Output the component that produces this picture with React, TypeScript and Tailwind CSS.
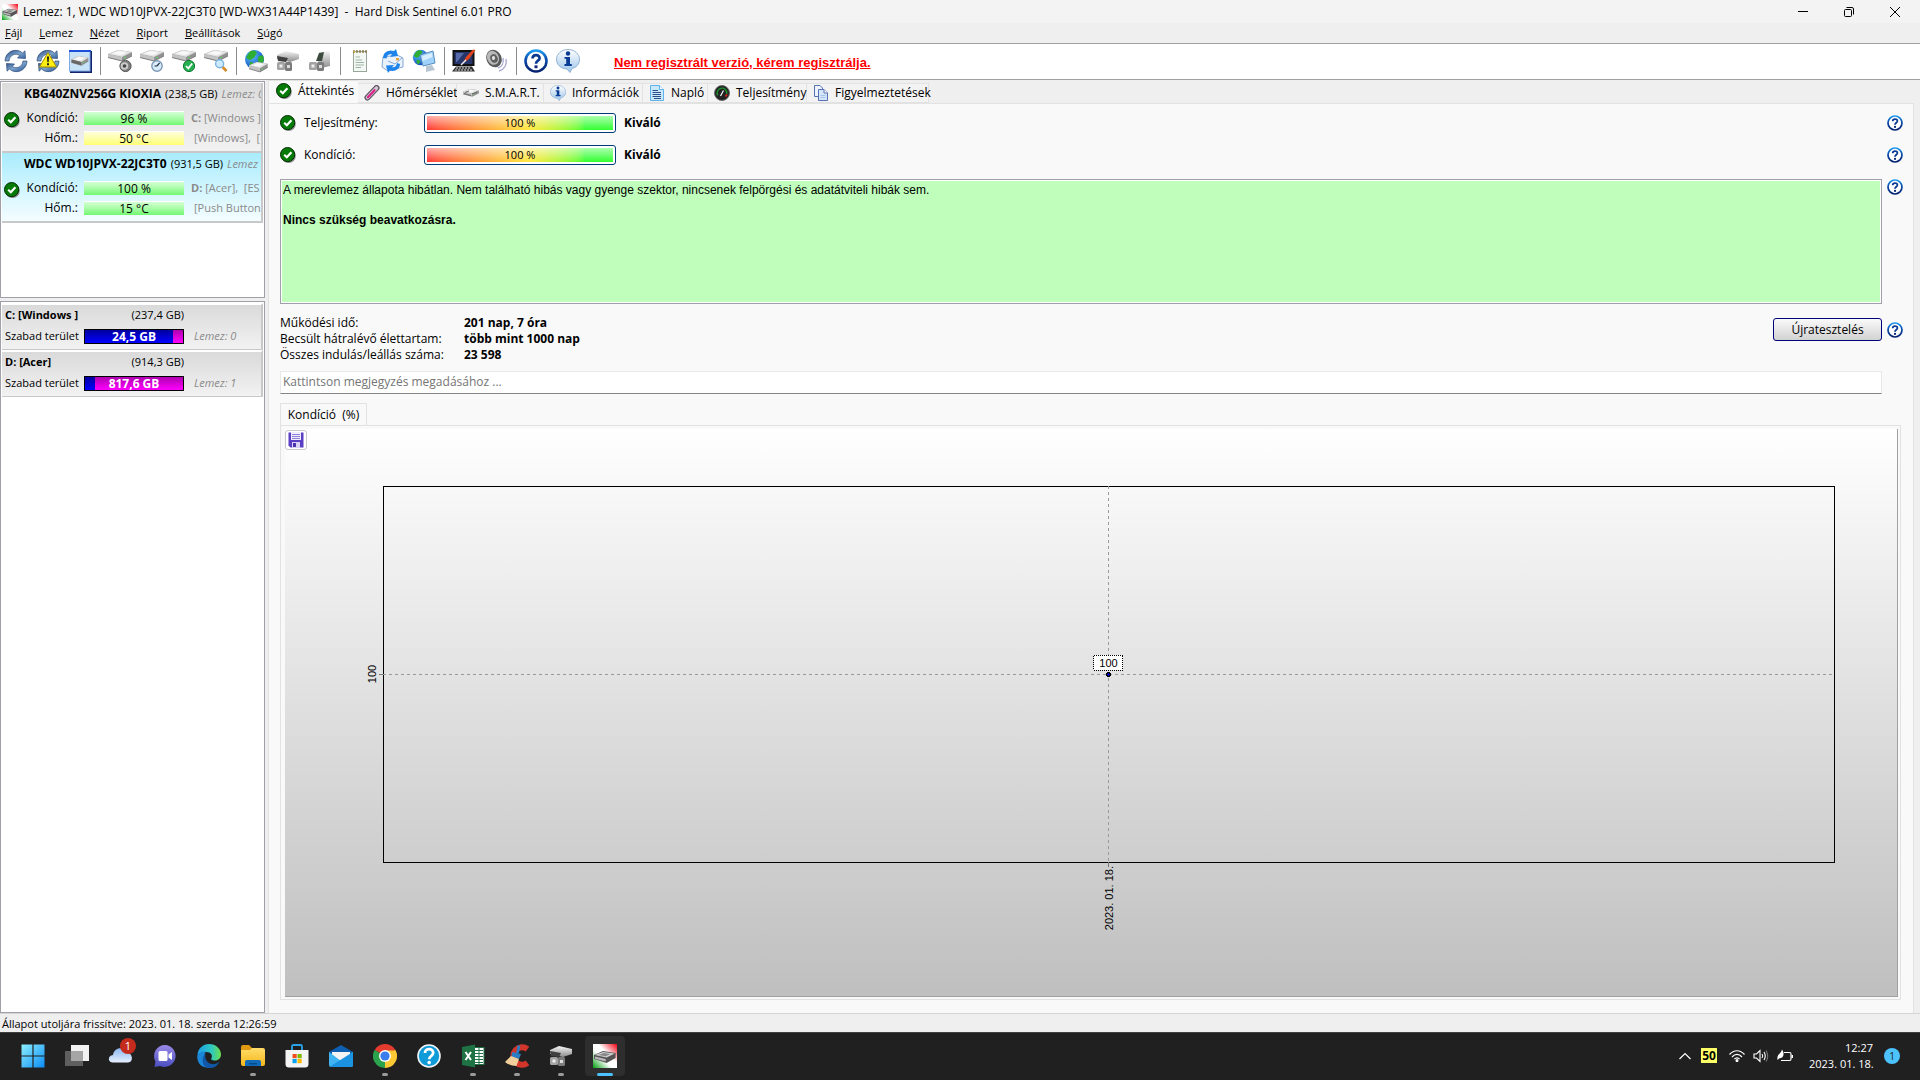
import type { ReactNode } from "react";

type IconProps = { size?: number };

function Defs() {
  return (
    <svg width="0" height="0" className="absolute" aria-hidden="true">
      <defs>
        <linearGradient id="metal" x1="0" y1="0" x2="0" y2="1">
          <stop offset="0" stopColor="#f4f4f4" />
          <stop offset="1" stopColor="#8c8c8c" />
        </linearGradient>
        <linearGradient id="blueArrow" x1="0" y1="0" x2="1" y2="1">
          <stop offset="0" stopColor="#1f3f7c" />
          <stop offset="0.5" stopColor="#7ea5cc" />
          <stop offset="1" stopColor="#1c4a92" />
        </linearGradient>
        <linearGradient id="helpRing" x1="0" y1="0" x2="0" y2="1">
          <stop offset="0" stopColor="#1e9bf0" />
          <stop offset="0.4" stopColor="#0a4fb0" />
          <stop offset="1" stopColor="#04206e" />
        </linearGradient>
        <radialGradient id="globe" cx="0.35" cy="0.3" r="0.8">
          <stop offset="0" stopColor="#5cc3ff" />
          <stop offset="1" stopColor="#0a3fb5" />
        </radialGradient>
        <linearGradient id="bubble" x1="0" y1="0" x2="0" y2="1">
          <stop offset="0" stopColor="#ffffff" />
          <stop offset="1" stopColor="#9cc4ea" />
        </linearGradient>
        <linearGradient id="win" x1="0" y1="0" x2="1" y2="1">
          <stop offset="0" stopColor="#8df0ff" />
          <stop offset="1" stopColor="#0a8cf5" />
        </linearGradient>
        <linearGradient id="flag" x1="1" y1="0" x2="0" y2="1">
          <stop offset="0" stopColor="#f00010" />
          <stop offset="0.4" stopColor="#ffffff" />
          <stop offset="0.6" stopColor="#ffffff" />
          <stop offset="1" stopColor="#00a010" />
        </linearGradient>
        <linearGradient id="edge" x1="0" y1="0" x2="1" y2="0">
          <stop offset="0" stopColor="#1c9de8" />
          <stop offset="0.6" stopColor="#2fc8c0" />
          <stop offset="1" stopColor="#6be04c" />
        </linearGradient>
        <linearGradient id="chat" x1="0" y1="0" x2="0" y2="1">
          <stop offset="0" stopColor="#9a8ae8" />
          <stop offset="1" stopColor="#4b4fc0" />
        </linearGradient>
        <linearGradient id="cloud" x1="0" y1="0" x2="0" y2="1">
          <stop offset="0" stopColor="#8db8f2" />
          <stop offset="1" stopColor="#e6f0fd" />
        </linearGradient>
        <linearGradient id="folder" x1="0" y1="0" x2="0" y2="1">
          <stop offset="0" stopColor="#ffdc6a" />
          <stop offset="1" stopColor="#f6b619" />
        </linearGradient>
      </defs>
    </svg>
  );
}

function Svg({ size = 24, box = 24, children }: { size?: number; box?: number; children: ReactNode }) {
  return (
    <svg width={size} height={size} viewBox={`0 0 ${box} ${box}`} className="shrink-0" aria-hidden="true">
      {children}
    </svg>
  );
}

/* A flat hard disk seen from above, drawn in a 24 by 12 area */
function DriveShape() {
  return (
    <g>
      <path d="M0 4 L10 0 L24 2 L24 6 L14 11 L0 7.500 Z" fill="#929292" />
      <path d="M0 4 L10 0 L24 2 L14 7 Z" fill="#e2e2e2" />
      <path d="M0 4 L14 7 L14 11 L0 7.500 Z" fill="#c4c4c4" />
      <path d="M4 3.800 L10.500 1 L19 2.200 L13 5.200 Z" fill="#f8f8f8" />
      <path d="M0 7.500 L14 11 L24 6" fill="none" stroke="#6c6c6c" strokeWidth="0.8" />
      <rect x="16" y="7" width="2" height="1.2" fill="#5ad35a" />
    </g>
  );
}

function CheckIcon({ size = 16 }: IconProps) {
  return (
    <Svg size={size} box={16}>
      <circle cx="8.6" cy="8.8" r="7.2" fill="#8a8a8a" />
      <circle cx="7.6" cy="7.6" r="7.1" fill="#067a06" stroke="#022b02" />
      <path d="M4.2 7.8 L6.8 10.2 L11.4 5.2" fill="none" stroke="#fff" strokeWidth="2.2" />
    </Svg>
  );
}

function HelpIcon({ size = 16 }: IconProps) {
  return (
    <Svg size={size} box={16}>
      <circle cx="8" cy="8" r="7" fill="#fff" stroke="url(#helpRing)" strokeWidth="1.7" />
      <path d="M5.7 6.3 C5.7 3.4 10.4 3.4 10.4 6.1 C10.4 7.9 8 7.7 8 9.8" fill="none" stroke="#0b3a94" strokeWidth="1.8" />
      <rect x="7" y="10.9" width="2" height="1.9" fill="#0b2a7c" />
    </Svg>
  );
}

function InfoIcon({ size = 24 }: IconProps) {
  return (
    <Svg size={size}>
      <path d="M12 0.500 C18.500 0.500 23.500 5 23.500 10.4 C23.500 15.500 20 18.500 16 19.500 L14 23.500 L11 20 C4.500 19.500 0.500 15.4 0.500 10.4 C0.500 5 5.500 0.500 12 0.500 Z" fill="url(#bubble)" stroke="#8fb0d4" />
      <circle cx="12" cy="4.500" r="2.200" fill="#0a3c96" />
      <path d="M8.500 8 H14 V15 H15.800 V17 H8.500 V15 H10.200 V9.800 H8.500 Z" fill="#0a3c96" />
    </Svg>
  );
}

function RefreshShape() {
  return (
    <g fill="url(#blueArrow)" stroke="#173769" strokeWidth="0.6">
      <path d="M1 12 C1 5 8 -1 16 2.2 L18.5 4 L21 1.8 L21.5 9.5 L13.5 9 L15.8 6.6 C11.5 3.6 5.6 6 5 12 Z" />
      <path d="M23 12 C23 19 16 25 8 21.8 L5.5 20 L3 22.2 L2.5 14.5 L10.5 15 L8.2 17.4 C12.5 20.4 18.4 18 19 12 Z" />
    </g>
  );
}

function RefreshIcon() {
  return <Svg><RefreshShape /></Svg>;
}

function RefreshWarnIcon() {
  return (
    <Svg>
      <RefreshShape />
      <path d="M12 3.5 L20.5 18 H3.5 Z" fill="#ffee10" stroke="#a89000" />
      <path d="M11 7.6 H13 L12.6 13.2 H11.4 Z M11.1 14.3 H12.9 V16.2 H11.1 Z" fill="#111" />
    </Svg>
  );
}

function DriveWindowIcon() {
  return (
    <Svg>
      <rect x="2" y="2" width="22" height="22" fill="#11246c" />
      <rect x="1.5" y="1.5" width="20.5" height="20.5" fill="#c8e2f8" stroke="#7fa8e4" />
      <rect x="1" y="1" width="22" height="2" fill="#1b4fd8" />
      <g transform="translate(3.500 7) scale(.7 .85)">
        <DriveShape />
        <path d="M0 4 V7.500 L14 11 V7 Z" fill="#666" />
      </g>
    </Svg>
  );
}

function DriveIcon({ children }: { children: ReactNode }) {
  return (
    <Svg>
      <g transform="translate(0 1)"><DriveShape /></g>
      {children}
    </Svg>
  );
}

const SpeakerDriveIcon = () => (
  <DriveIcon>
    <circle cx="17.500" cy="17" r="5.600" fill="#7e7e7e" stroke="#555" />
    <circle cx="16.500" cy="17" r="3.8" fill="#c9c9c9" />
    <circle cx="16.500" cy="17" r="1.8" fill="#444" />
  </DriveIcon>
);
const ClockDriveIcon = () => (
  <DriveIcon>
    <circle cx="17" cy="17" r="5.2" fill="#d9ecfb" stroke="#7d98b4" strokeWidth="1.4" />
    <path d="M17 17 L19.6 13.8 M17 17 H14.5" stroke="#234" strokeWidth="1.2" />
  </DriveIcon>
);
const CheckDriveIcon = () => (
  <DriveIcon>
    <circle cx="17" cy="17" r="5.6" fill="#27b052" stroke="#0c7a30" />
    <path d="M14 17 L16.3 19.400 L20.2 14.500" fill="none" stroke="#fff" strokeWidth="1.8" />
  </DriveIcon>
);
const SearchDriveIcon = () => (
  <DriveIcon>
    <path d="M18.5 18 L22.5 22" stroke="#d98a28" strokeWidth="2.6" />
    <circle cx="15.6" cy="14.8" r="4" fill="#cdeaff" stroke="#7ab4e2" strokeWidth="1.4" />
  </DriveIcon>
);

function GlobeShape() {
  return (
    <g>
      <circle cx="10" cy="10" r="9" fill="url(#globe)" />
      <path d="M5 3 C9 0 13 2 12 5 C10 6 11 8 8 9 C6 12 3 9 2 8 Z M14 7 L18 6 C20 10 18 15 15 16 C12 14 15 12 13 10 Z M6 12 L10 14 L8 18 C5 17 5 14 6 12 Z" fill="#2fae34" />
    </g>
  );
}
const GlobeDriveIcon = () => (
  <Svg>
    <g transform="scale(1.05)"><GlobeShape /></g>
    <g transform="translate(5 13) scale(.78 .9)"><DriveShape /></g>
  </Svg>
);
function DockIcon({ upright = false }: { upright?: boolean }) {
  return (
    <Svg>
      <path d={upright ? "M11 3 L20 2 L22 4 V17 L13 19 L10 16 Z" : "M1 6 L10 2 L23 5 V10 L14 13 L1 10 Z"} fill="url(#metal)" />
      {upright && <path d="M11 4 L16 3 L14 12 L8 12 Z" fill="#3c4a3e" />}
      {!upright && <path d="M1 7 L12 9 L10 13 L2 12 Z" fill="#404040" />}
      <rect x="1" y="13" width="8" height="8" rx="1.5" fill="#a2a2a2" />
      <rect x="9" y="13" width="7" height="9" rx="1.5" fill="#7c7c7c" />
      <rect x="3.5" y="15.5" width="3" height="3" fill="#eee" />
      <rect x="11" y="16" width="3" height="3" fill="#ddd" />
    </Svg>
  );
}
const NotepadIcon = () => (
  <Svg>
    <rect x="5.500" y="2.500" width="13" height="20" fill="#f4f8f4" stroke="#98a79a" />
    <path d="M6 1 V4 M9 1 V4 M12 1 V4 M15 1 V4 M18 1 V4" stroke="#7c6c30" strokeWidth="1.2" />
    <path d="M7.5 8 H12 M7.5 11 H14 M7.5 13.5 H16 M7.5 16 H16 M7.5 18.5 H13" stroke="#9db4a4" />
    <path d="M5 2 L7 2 L7 4 Z" fill="#e8b628" />
  </Svg>
);
const MailIcon = () => (
  <Svg>
    <path d="M3 8 L17 6 L23 9 V18 L8 22 L2 18 Z" fill="#e9f2fc" stroke="#86a9d4" />
    <path d="M8 12 L15 15 L22 9" fill="none" stroke="#86a9d4" />
    <path d="M3 9 C3 3 9 0 14 2 L16 0 L18 7 L10 8 L12 5.4 C9 4.6 7 6 6.5 9.5 Z" fill="#1f84ea" />
    <path d="M20 15 C20 20 15 23 10 21.6 L8 24 L6 16.5 L14 16 L12 18.2 C15 18.6 16.5 17 17 14 Z" fill="#1f84ea" />
    <rect x="16" y="9" width="3" height="2.4" fill="#e8a23a" />
  </Svg>
);
const NetworkIcon = () => (
  <Svg>
    <g transform="scale(.85)"><GlobeShape /></g>
    <path d="M8 6 L21 2 L23 14 L11 17 Z" fill="#9fd2fb" stroke="#5b8cba" />
    <path d="M10 7 L20 4 L20.5 8 L10.5 12 Z" fill="#d7eefe" />
    <path d="M14 17 L20 16 L23 21 L14 23 Z" fill="#b9c6d4" />
  </Svg>
);
const ScreenPenIcon = () => (
  <Svg>
    <rect x="1.5" y="2" width="20" height="14" fill="#26366a" stroke="#111" strokeWidth="2" />
    <path d="M4 4 H12 L5 13 H4 Z" fill="#556aa8" />
    <path d="M23.500 1 L21 0.500 L14 8 L11 14 L17 10 Z" fill="#e3451c" />
    <path d="M14 11 L9 16" stroke="#eee" strokeWidth="1.5" />
    <path d="M0 22.5 L4 17.500 H20 L23 22.5 Z" fill="#333" />
    <path d="M4 19 H19 M3 21 H20" stroke="#d9d9d9" strokeWidth="1" strokeDasharray="2 1" />
  </Svg>
);
const LoudspeakerIcon = () => (
  <Svg>
    <path d="M15 22 C21 20 23 15 22 10 M14 19 C18 18 20 14 19 9" fill="none" stroke="#a9a9cf" strokeWidth="1.4" />
    <ellipse cx="10" cy="9.5" rx="7.500" ry="9" transform="rotate(-25 10 9.5)" fill="#5a5a5a" />
    <ellipse cx="9" cy="8.8" rx="5.800" ry="7.2" transform="rotate(-25 9 8.8)" fill="#b8b8b8" />
    <ellipse cx="10" cy="9.5" rx="3.6" ry="4.4" transform="rotate(-25 10 9.5)" fill="#606060" />
    <ellipse cx="9.5" cy="9" rx="1.6" ry="2" fill="#e4e4e4" />
  </Svg>
);

const ThermoIcon = () => (
  <Svg size={16} box={16}>
    <path d="M3.500 12.500 L12.500 3" stroke="#5d5560" strokeWidth="6" strokeLinecap="round" />
    <path d="M3.500 12.5 L12.500 3" stroke="#cfc6d2" strokeWidth="3.6" strokeLinecap="round" />
    <path d="M3.900 12.2 L10.500 5.200" stroke="#e0218a" strokeWidth="2.2" strokeLinecap="round" />
  </Svg>
);
const SmallDriveIcon = () => (
  <Svg size={16} box={16}>
    <g transform="translate(0 4) scale(.66)"><DriveShape /></g>
    <path d="M2 7.500 L6 6 M9 9 L14 7 M1 8.500 L8 10.500" stroke="#666" />
  </Svg>
);
const LogIcon = () => (
  <Svg size={16} box={16}>
    <path d="M1.5 0.5 H10.5 L14.5 4.5 V15.5 H1.5 Z" fill="#c9e8fc" stroke="#5fb2ea" />
    <path d="M10.5 0.5 V4.5 H14.5" fill="#fff" stroke="#5fb2ea" />
    <path d="M3.5 5.5 H9 M3.5 7.5 H12 M3.5 9.5 H12 M3.5 11.5 H12 M5 13.5 H12" stroke="#2c4f8c" />
  </Svg>
);
const GaugeIcon = () => (
  <Svg size={16} box={16}>
    <circle cx="8" cy="8" r="7.5" fill="#222" stroke="#6b6b6b" />
    <circle cx="8" cy="8" r="4.8" fill="none" stroke="#1d8f2d" strokeWidth="1.6" strokeDasharray="18 12" transform="rotate(150 8 8)" />
    <path d="M11.5 11.5 L13 9.5" stroke="#e02020" strokeWidth="1.8" />
    <path d="M6.5 11 L9.5 5.5" stroke="#fff" strokeWidth="1.2" />
  </Svg>
);
const CopyIcon = () => (
  <Svg size={16} box={16}>
    <path d="M1.5 0.5 H7 L9.5 3 V11.5 H1.5 Z" fill="#eef4fd" stroke="#5670b4" />
    <path d="M5.5 4.5 H11 L14.5 8 V15.5 H5.5 Z" fill="#d6e6fa" stroke="#5670b4" />
    <path d="M11 4.5 V8 H14.5" fill="#fff" stroke="#5670b4" />
    <path d="M7.5 10.5 H12.5 M7.5 12.5 H12.5" stroke="#a5c2ea" />
  </Svg>
);

function AppIcon({ size = 16 }: IconProps) {
  return (
    <Svg size={size}>
      <rect width="24" height="24" fill="url(#flag)" />
      <g transform="translate(1 7) scale(.9 1)">
        <path d="M0 4 L10 0 L24 2 L24 7 L14 12 L0 8 Z" fill="#555" />
        <path d="M1 4 L10 1 L23 2.5 L14 6.4 Z" fill="#cfcfcf" />
        <path d="M5 4 L11 2 L18 3 L13 5.2 Z" fill="#888" />
        <path d="M1 5.5 L13 8 V10.5 L1 7.8 Z" fill="#b8b8b8" />
      </g>
    </Svg>
  );
}

const toolbarGroups: { label: string; icon: ReactNode }[][] = [
  [
    { label: "Frissítés", icon: <RefreshIcon /> },
    { label: "Teljes frissítés", icon: <RefreshWarnIcon /> },
    { label: "Lemez ablak", icon: <DriveWindowIcon /> },
  ],
  [
    { label: "Zajszint", icon: <SpeakerDriveIcon /> },
    { label: "Rövid teszt", icon: <ClockDriveIcon /> },
    { label: "Hosszú teszt", icon: <CheckDriveIcon /> },
    { label: "Felületi teszt", icon: <SearchDriveIcon /> },
  ],
  [
    { label: "Online", icon: <GlobeDriveIcon /> },
    { label: "Csatlakoztatás", icon: <DockIcon /> },
    { label: "Leválasztás", icon: <DockIcon upright /> },
  ],
  [
    { label: "Jelentés", icon: <NotepadIcon /> },
    { label: "Jelentés küldése", icon: <MailIcon /> },
    { label: "Hálózat", icon: <NetworkIcon /> },
  ],
  [
    { label: "Beállítások", icon: <ScreenPenIcon /> },
    { label: "Hangok", icon: <LoudspeakerIcon /> },
  ],
  [
    { label: "Súgó", icon: <HelpIcon size={24} /> },
    { label: "Névjegy", icon: <InfoIcon /> },
  ],
];

function TitleBar() {
  return (
    <header className="flex h-[23px] shrink-0 items-center bg-[#f3f3f3] pl-0.5">
      <AppIcon />
      <h1 className="ml-[5px] grow text-xs whitespace-pre">
        Lemez: 1, WDC WD10JPVX-22JC3T0 [WD-WX31A44P1439]  -  Hard Disk Sentinel 6.01 PRO
      </h1>
      <button aria-label="Kis méret" className="flex h-full w-[46px] items-center justify-center">
        <svg width="10" height="10" viewBox="0 0 10 10"><path d="M0 4.5 H10" stroke="#000" /></svg>
      </button>
      <button aria-label="Előző méret" className="flex h-full w-[46px] items-center justify-center">
        <svg width="10" height="10" viewBox="0 0 10 10" fill="none" stroke="#000">
          <rect x="0.5" y="2.5" width="7" height="7" rx="1" />
          <path d="M2.5 0.5 H8 Q9.5 0.5 9.5 2 V7.5" />
        </svg>
      </button>
      <button aria-label="Bezárás" className="mr-0.5 flex h-full w-[46px] items-center justify-center">
        <svg width="10" height="10" viewBox="0 0 10 10"><path d="M0 0 L10 10 M10 0 L0 10" stroke="#000" /></svg>
      </button>
    </header>
  );
}

const menus = [
  ["F", "ájl"],
  ["L", "emez"],
  ["N", "ézet"],
  ["R", "iport"],
  ["B", "eállítások"],
  ["S", "úgó"],
];

function MenuBar() {
  return (
    <nav className="flex h-[21px] shrink-0 items-center gap-[17px] border-b border-[#a0a0a0] bg-[#efefef] pl-[5px] text-[11px]">
      {menus.map(([key, rest]) => (
        <button key={key} className="whitespace-nowrap">
          <span className="underline">{key}</span>{rest}
        </button>
      ))}
    </nav>
  );
}

function Toolbar() {
  return (
    <div className="flex h-9 shrink-0 items-center border-b border-[#a0a0a0] bg-white">
      {toolbarGroups.map((group, i) => (
        <div key={i} className="flex items-center pb-0.5">
          {i > 0 && <span className="mr-[3px] ml-1 h-7 w-px bg-[#8c8c8c]" />}
          {group.map((b) => (
            <button key={b.label} aria-label={b.label} className="flex h-8 w-8 items-center justify-center">
              {b.icon}
            </button>
          ))}
        </div>
      ))}
      <a href="#register" className="ml-[30px] pt-[3px] font-['Liberation_Sans',sans-serif] text-[13px] font-bold whitespace-nowrap text-[#ff0000] underline">
        Nem regisztrált verzió, kérem regisztrálja.
      </a>
    </div>
  );
}

type Disk = { name: string; size: string; lemez: string; health: string; temp: string; tempWarm: boolean; drive: string; parts: string; volumes: string; selected: boolean };

const disks: Disk[] = [
  { name: "KBG40ZNV256G KIOXIA", size: "(238,5 GB)", lemez: "Lemez: 0", health: "96 %", temp: "50 °C", tempWarm: true, drive: "C:", parts: "[Windows ]", volumes: "[Windows],  [", selected: false },
  { name: "WDC WD10JPVX-22JC3T0", size: "(931,5 GB)", lemez: "Lemez", health: "100 %", temp: "15 °C", tempWarm: false, drive: "D:", parts: "[Acer],  [ES", volumes: "[Push Button", selected: true },
];

function Meter({ text, warm }: { text: string; warm?: boolean }) {
  return (
    <span className={`h-3.5 w-[100px] shrink-0 border-t border-white text-center text-xs leading-3.5 ${warm ? "bg-linear-to-b from-[#ffffd8] to-[#ffff70]" : "bg-linear-to-b from-[#d4ffd4] to-[#70f870]"}`}>
      {text}
    </span>
  );
}

function DiskItem({ disk }: { disk: Disk }) {
  return (
    <button className={`flex h-[70px] w-full flex-col items-start overflow-hidden border-r-2 border-b-2 border-[#c8c8c8] text-left text-xs whitespace-nowrap ${disk.selected ? "bg-linear-to-b from-[#a8ecfd] to-[#f4fdff]" : "bg-linear-to-b from-[#dcdcdc] to-[#f2f2f2]"}`}>
      <span className="flex h-[22px] items-center gap-1 pl-[22px]">
        <b>{disk.name}</b>
        <span className="text-[11px]">{disk.size}</span>
        <i className="text-[11px] text-[#8a8a8a]">{disk.lemez}</i>
      </span>
      <span className="mt-[3px] flex items-start">
        <span className="mt-1 w-6 shrink-0 pl-0.5"><CheckIcon /></span>
        <span className="flex flex-col">
          <span className="flex h-5 items-center">
            <span className="mr-1 w-[54px] pr-0.5 text-right">Kondíció:</span>
            <Meter text={disk.health} />
            <span className="ml-[7px] text-[11px] whitespace-pre text-[#8a8a8a]"><b>{disk.drive}</b> {disk.parts}</span>
          </span>
          <span className="flex h-5 items-center">
            <span className="mr-1 w-[54px] pr-0.5 text-right">Hőm.:</span>
            <Meter text={disk.temp} warm={disk.tempWarm} />
            <span className="ml-[10px] text-[11px] whitespace-pre text-[#8a8a8a]">{disk.volumes}</span>
          </span>
        </span>
      </span>
    </button>
  );
}

const partitions = [
  { name: "C: [Windows ]", size: "(237,4 GB)", free: "24,5 GB", used: 90, lemez: "Lemez: 0" },
  { name: "D: [Acer]", size: "(914,3 GB)", free: "817,6 GB", used: 10, lemez: "Lemez: 1" },
];

function Sidebar() {
  return (
    <aside className="mt-px flex w-[265px] shrink-0 flex-col gap-[3px]">
      <div className="h-[217px] shrink-0 border border-[#a0a0a8] bg-white p-px">
        {disks.map((d) => <DiskItem key={d.name} disk={d} />)}
      </div>
      <div className="grow border border-[#a0a0a8] bg-white p-px">
        {partitions.map((p) => (
          <button key={p.name} className="flex h-[47px] w-full flex-col items-start border-t-2 border-r-2 border-b border-[#c8c8c8] border-t-white bg-linear-to-b from-[#dadada] to-[#f2f2f2] pl-[3px] text-left text-[11px] whitespace-nowrap">
            <span className="flex h-5 w-[179px] items-center justify-between">
              <b>{p.name}</b>
              <span>{p.size}</span>
            </span>
            <span className="mt-[3px] flex items-center">
              <span className="w-[79px]">Szabad terület</span>
              <span className="grid h-[15px] w-[100px] border border-black bg-linear-to-b from-[#b000b0] to-[#ff00ff]">
                <span className="col-start-1 row-start-1 h-full bg-linear-to-b from-[#0000a0] to-[#0000ff]" style={{ width: `${p.used}%` }} />
                <b className="col-start-1 row-start-1 text-center text-xs leading-[13px] text-white">{p.free}</b>
              </span>
              <i className="ml-[10px] text-[#8a8a8a]">{p.lemez}</i>
            </span>
          </button>
        ))}
      </div>
    </aside>
  );
}

const tabs = [
  { label: "Hőmérséklet", icon: <ThermoIcon />, cls: "w-[99px]" },
  { label: "S.M.A.R.T.", icon: <SmallDriveIcon />, cls: "w-[87px]" },
  { label: "Információk", icon: <InfoIcon size={16} />, cls: "w-[99px]" },
  { label: "Napló", icon: <LogIcon />, cls: "w-[65px]" },
  { label: "Teljesítmény", icon: <GaugeIcon />, cls: "w-[99px]" },
  { label: "Figyelmeztetések", icon: <CopyIcon />, cls: "w-[122px]" },
];

function Tabs() {
  return (
    <div role="tablist" className="flex h-[23px] shrink-0 items-end text-xs whitespace-nowrap">
      <button role="tab" aria-selected="true" className="flex h-[23px] w-[90px] items-center gap-1.5 border-t border-l border-[#e2e2e2] bg-[#f9f9f9] pb-0.5 pl-[7px]">
        <CheckIcon />
        Áttekintés
      </button>
      {tabs.map((t) => (
        <button key={t.label} role="tab" aria-selected="false" className={`flex h-5 items-center gap-1.5 border border-l-0 border-[#e2e2e2] bg-[#f3f3f3] pl-1.5 ${t.cls}`}>
          {t.icon}
          {t.label}
        </button>
      ))}
    </div>
  );
}

function HelpButton() {
  return (
    <button aria-label="Súgó" className="ml-[5px] h-4 w-4 shrink-0">
      <HelpIcon />
    </button>
  );
}

function StatusRow({ label }: { label: string }) {
  return (
    <div className="flex h-5 items-center">
      <CheckIcon />
      <span className="ml-2 w-[120px]">{label}</span>
      <span className="h-5 w-48 rounded-[3px] border border-[#003c78] bg-white p-0.5">
        <span className="block h-full bg-linear-to-r from-[#ff3232] via-[#ffe63c] via-55% to-[#32ff32] to-85%">
          <span className="block h-full bg-linear-to-b from-white/60 to-transparent text-center text-[11px] leading-3.5">100 %</span>
        </span>
      </span>
      <b className="ml-2 grow">Kiváló</b>
      <HelpButton />
    </div>
  );
}

const stats = [
  ["Működési idő:", "201 nap, 7 óra"],
  ["Becsült hátralévő élettartam:", "több mint 1000 nap"],
  ["Összes indulás/leállás száma:", "23 598"],
];

function HealthChart() {
  return (
    <div className="flex min-h-0 grow flex-col border-r border-b border-[#a0a0a0] bg-linear-to-b from-white to-[#bfbfbf]">
      <button aria-label="Mentés" className="mt-px flex h-5 w-[22px] shrink-0 items-center justify-center rounded-[3px] border border-[#c8c8c8] bg-white">
        <svg width="16" height="16" viewBox="0 0 16 16">
          <path d="M0.5 0.5 H15.5 V15.5 H2.5 L0.5 13.5 Z" fill="#5a3fc4" />
          <rect x="3" y="0" width="10" height="8" fill="#f0eefc" />
          <path d="M4 2.5 H12 M4 4.5 H12 M4 6.5 H12" stroke="#8f80da" />
          <rect x="4" y="10" width="8" height="6" fill="#d8d2f4" />
          <rect x="5" y="11" width="3" height="4" fill="#4a32b0" />
        </svg>
      </button>
      <div className="mt-9 mr-[63px] mb-[134px] ml-[98px] flex min-h-0 grow">
        <svg className="h-0 min-h-full w-full overflow-visible font-['Liberation_Sans',sans-serif] text-[11px]" shapeRendering="crispEdges">
          <rect x="0" y="0" width="100%" height="100%" fill="none" stroke="#000" />
          <g stroke="#9a9a9a" strokeDasharray="3 3">
            <line x1="0" y1="50%" x2="100%" y2="50%" />
            <line x1="50%" y1="0" x2="50%" y2="100%" />
          </g>
          <svg x="0" y="50%" className="overflow-visible">
            <line x1="-4" y1="0" x2="0" y2="0" stroke="#777" />
            <text transform="rotate(-90)" x="0" y="-7" textAnchor="middle">100</text>
          </svg>
          <svg x="50%" y="100%" className="overflow-visible">
            <line x1="0" y1="0" x2="0" y2="5" stroke="#777" />
            <text transform="rotate(-90)" x="-4" y="4" textAnchor="end">2023. 01. 18.</text>
          </svg>
          <svg x="50%" y="50%" className="overflow-visible">
            <rect x="-15" y="-19" width="29" height="15" fill="#fff" stroke="#000" strokeDasharray="1 1" />
            <text x="0" y="-7" textAnchor="middle">100</text>
            <path d="M-2 -1 H-1 V-2 H1 V-1 H2 V1 H1 V2 H-1 V1 H-2 Z" fill="#00c" stroke="#000" />
          </svg>
        </svg>
      </div>
    </div>
  );
}

function Overview() {
  return (
    <main className="mr-1.5 flex min-h-0 grow flex-col border border-b-0 border-[#e2e2e2] bg-[#f9f9f9] pt-[9px] pr-2.5 pb-[13px] pl-[11px] text-xs">
      <div className="flex flex-col gap-3">
        <StatusRow label="Teljesítmény:" />
        <StatusRow label="Kondíció:" />
      </div>
      <div className="mt-3.5 flex items-start">
        <div className="h-[125px] grow border border-[#a0a0a8] bg-white p-px">
          <div className="h-full bg-[#bfffbb] px-px pt-0.5 font-['Liberation_Sans',sans-serif] leading-[15px]">
            <p>A merevlemez állapota hibátlan. Nem található hibás vagy gyenge szektor, nincsenek felpörgési és adatátviteli hibák sem.</p>
            <p className="mt-[15px] font-bold">Nincs szükség beavatkozásra.</p>
          </div>
        </div>
        <HelpButton />
      </div>
      <div className="mt-[11px] flex items-start">
        <dl className="grow leading-4">
          {stats.map(([k, v]) => (
            <div key={k} className="flex">
              <dt className="w-[184px]">{k}</dt>
              <dd className="font-bold">{v}</dd>
            </div>
          ))}
        </dl>
        <div className="mt-[3px] flex items-center">
          <button className="h-[23px] w-[109px] rounded-[3px] border border-[#00007c] bg-linear-to-b from-[#fafafa] to-[#d2d2d2]">Újratesztelés</button>
          <HelpButton />
        </div>
      </div>
      <input
        aria-label="Megjegyzés"
        placeholder="Kattintson megjegyzés megadásához ..."
        className="mt-2 mr-[21px] h-[23px] shrink-0 border border-[#e8e8e8] border-b-[#858585] bg-white px-0.5 pb-0.5 placeholder:text-[#757575] placeholder:opacity-100"
      />
      <div role="tablist" className="mt-[9px] flex shrink-0">
        <button role="tab" aria-selected="true" className="h-[22px] w-[87px] border border-b-0 border-[#e2e2e2] whitespace-pre">Kondíció  (%)</button>
      </div>
      <section className="mr-0.5 flex min-h-0 grow flex-col border border-[#e2e2e2] pt-[3px] pr-0.5 pb-0.5 pl-1">
        <HealthChart />
      </section>
    </main>
  );
}

const taskbarApps: { label: string; running?: boolean; active?: boolean; icon: ReactNode }[] = [
  {
    label: "Start",
    icon: (
      <Svg><path d="M0.5 0.5 H11.4 V11.4 H0.5 Z M12.6 0.5 H23.5 V11.4 H12.6 Z M0.5 12.6 H11.4 V23.5 H0.5 Z M12.6 12.6 H23.5 V23.5 H12.6 Z" fill="url(#win)" /></Svg>
    ),
  },
  {
    label: "Feladatnézet",
    icon: (
      <Svg>
        <rect x="6" y="1" width="18" height="16" fill="#f2f2f2" />
        <rect x="0" y="7" width="18" height="15" fill="#6b6b6b" fillOpacity="0.85" />
        <rect x="6" y="7" width="12" height="10" fill="#a6a6a6" />
      </Svg>
    ),
  },
  {
    label: "Időjárás",
    icon: (
      <svg width="28" height="26" viewBox="0 0 28 26" className="overflow-visible">
        <path d="M6 19.5 C1 19.5 0 13 6 12 C7 4 17 3 19 9.5 C26 9 27 19.5 21 19.5 Z" fill="url(#cloud)" />
        <circle cx="21" cy="3" r="8" fill="#c42b1c" />
        <text x="21" y="7" textAnchor="middle" fontSize="11" fill="#fff">1</text>
      </svg>
    ),
  },
  {
    label: "Csevegés",
    icon: (
      <Svg>
        <path d="M12 1 A11 11 0 1 1 7 22 L1.5 23 L2.5 17.5 A11 11 0 0 1 12 1 Z" fill="url(#chat)" />
        <rect x="5.5" y="7" width="9" height="10" rx="1.5" fill="#fff" />
        <path d="M15.5 10.5 L19 8 V16 L15.5 13.5 Z" fill="#fff" />
      </Svg>
    ),
  },
  {
    label: "Edge",
    icon: (
      <Svg>
        <path d="M0.5 11 C1 4 6 0 12 0 C19 0 24 5 24 10.5 C24 14 21.5 16.5 18 16.5 C15 16.5 13.5 15.5 14.5 14 C16 11 13.5 8 9.5 8 C5.5 8 2 9.5 0.5 11 Z" fill="url(#edge)" />
        <path d="M0.2 12 C1 9 5 7.2 9 7.6 C6 11 7.5 20 16 21.5 C11 25.5 0 24 0.2 12 Z" fill="#1b86d8" />
        <path d="M8.5 10 C7 16 12 21 18 20 C20 19.6 21.5 18.6 22.5 17.5 C19.5 24.5 12 25.4 8 22.5 C4.5 19 5 12 8.5 10 Z" fill="#1258a8" />
      </Svg>
    ),
  },
  {
    label: "Fájlkezelő",
    running: true,
    icon: (
      <Svg>
        <path d="M0 3 Q0 1 2 1 H8 L11 4 V8 H0 Z" fill="#e09a12" />
        <path d="M0 6 H9 L11 4 H22 Q24 4 24 6 V20 Q24 22 22 22 H2 Q0 22 0 20 Z" fill="url(#folder)" />
        <path d="M4 22 V18 Q4 16 6 16 H18 Q20 16 20 18 V22 Z" fill="#0f6cbd" />
        <rect x="8" y="19" width="8" height="1.4" fill="#0a4a86" />
      </Svg>
    ),
  },
  {
    label: "Microsoft Store",
    icon: (
      <Svg>
        <path d="M7 7 V2.5 Q7 1 8.5 1 H15.5 Q17 1 17 2.5 V7" fill="none" stroke="#2aa4e8" strokeWidth="1.8" />
        <path d="M0.5 6 H23.5 V20 Q23.5 23.5 20 23.5 H4 Q0.5 23.5 0.5 20 Z" fill="#f4f4f4" />
        <rect x="7.5" y="10" width="4.2" height="4.2" fill="#f25022" />
        <rect x="12.5" y="10" width="4.2" height="4.2" fill="#7fba00" />
        <rect x="7.5" y="15" width="4.2" height="4.2" fill="#00a4ef" />
        <rect x="12.5" y="15" width="4.2" height="4.2" fill="#ffb900" />
      </Svg>
    ),
  },
  {
    label: "Posta",
    icon: (
      <Svg>
        <path d="M0 8 L12 1 L24 8 V12 H0 Z" fill="#0f5fb0" />
        <path d="M3 8 H21 V15 L12 18 L3 14 Z" fill="#f4f4f4" />
        <path d="M0 8 L12 17 L24 8 V21 Q24 23 22 23 H2 Q0 23 0 21 Z" fill="#3fb4f0" />
        <path d="M24 8 L1 22.6 Q1.400 23 2 23 H22 Q24 23 24 21 Z" fill="#1c93e0" />
      </Svg>
    ),
  },
  {
    label: "Chrome",
    running: true,
    icon: (
      <Svg>
        <path d="M12 12 L1.600 6 A12 12 0 0 1 22.400 6 Z" fill="#e33b2e" />
        <path d="M12 12 L22.400 6 A12 12 0 0 1 12 24 Z" fill="#fcc934" />
        <path d="M12 12 L12 24 A12 12 0 0 1 1.600 6 Z" fill="#2ba24c" />
        <path d="M12 6.400 H22.600 L17 15 L12 24 Z" fill="#fcc934" />
        <circle cx="12" cy="12" r="6" fill="#fff" />
        <circle cx="12" cy="12" r="4.600" fill="#3b7ded" />
      </Svg>
    ),
  },
  {
    label: "Segítség",
    icon: (
      <Svg>
        <circle cx="12" cy="12" r="11" fill="#0f9ad8" stroke="#f2f6f8" strokeWidth="1.6" />
        <path d="M8 9 C8 4 16.200 4 16.200 8.800 C16.200 12 12.200 12 12.200 15.200" fill="none" stroke="#fff" strokeWidth="2.800" />
        <circle cx="12.200" cy="18.600" r="1.800" fill="#fff" />
      </Svg>
    ),
  },
  {
    label: "Excel",
    running: true,
    icon: (
      <Svg>
        <rect x="12" y="3.500" width="11" height="17" fill="#fff" stroke="#1f7244" />
        <path d="M13 6.500 H22 M13 9.500 H22 M13 12.500 H22 M13 15.500 H22 M13 18.500 H22 M18 4 V20" stroke="#1f7244" />
        <path d="M1 3 L14 0.500 V23.500 L1 21 Z" fill="#1f7244" />
        <path d="M4.500 8 L10 16 M10 8 L4.500 16" stroke="#fff" strokeWidth="2" />
      </Svg>
    ),
  },
  {
    label: "CCleaner",
    running: true,
    icon: (
      <Svg>
        <path d="M22.500 5 A8.800 8.800 0 1 0 22.500 19" fill="none" stroke="#d3352a" strokeWidth="6" />
        <path d="M14 1.500 L12.500 9" stroke="#2c7cc4" strokeWidth="2.800" />
        <path d="M7.500 8 L16 10 L14 15 L6 13 Z" fill="#2c7cc4" />
        <path d="M6 12 L14 15 L11.500 22 Q5 22 0 18 Z" fill="#f0cf9c" />
      </Svg>
    ),
  },
  { label: "Dokkoló", running: true, icon: <DockIcon /> },
  { label: "Hard Disk Sentinel", active: true, icon: <AppIcon size={24} /> },
];

function Taskbar() {
  return (
    <footer className="flex h-12 shrink-0 items-center border-t border-[#404040] bg-[#202020] pr-5 pb-0.5 pl-[11px] text-white">
      <div className="flex grow items-center">
        {taskbarApps.map((a) => (
          <div key={a.label} className="flex w-11 justify-center">
            <button aria-label={a.label} className={`grid h-10 w-10 place-items-center rounded ${a.active ? "bg-[#2e2e2e]" : ""}`}>
              <span className="col-start-1 row-start-1">{a.icon}</span>
              {a.running && <span className="col-start-1 row-start-1 h-[3px] w-1.5 self-end rounded-full bg-[#9a9a9a]" />}
              {a.active && <span className="col-start-1 row-start-1 h-[3px] w-4 self-end rounded-full bg-[#4cc2ff]" />}
            </button>
          </div>
        ))}
      </div>
      <svg width="12" height="8" viewBox="0 0 12 8" className="mr-[10px]"><path d="M0.500 7 L6 1.500 L11.500 7" fill="none" stroke="#fff" strokeWidth="1.200" /></svg>
      <b className="h-[15px] w-4 bg-[#ffff66] text-center text-xs leading-[15px] text-black">50</b>
      <svg width="16" height="12" viewBox="0 0 16 12" fill="none" stroke="#fff" strokeWidth="1.200" className="ml-3">
        <path d="M0.500 4.500 C5 -0.500 11 -0.500 15.500 4.500 M3 7 C6 3.600 10 3.600 13 7 M5.400 9.200 C7 7.400 9 7.400 10.600 9.200" />
        <circle cx="8" cy="10.600" r="0.900" fill="#fff" />
      </svg>
      <svg width="16" height="14" viewBox="0 0 16 14" fill="none" stroke="#fff" strokeWidth="1.100" className="ml-2">
        <path d="M1 5 H3.500 L7 1.500 V12.500 L3.500 9 H1 Z M9 5 Q10.500 7 9 9 M11 3 Q13.500 7 11 11" />
        <path d="M13 1.500 Q16.500 7 13 12.500" stroke="#777" />
      </svg>
      <svg width="17" height="14" viewBox="0 0 17 14" className="ml-2">
        <path d="M7 3.500 H12.500 Q14 3.500 14 5 V10 Q14 11.500 12.500 11.500 H4" fill="none" stroke="#fff" strokeWidth="1.200" />
        <rect x="14.500" y="6" width="1.500" height="3" fill="#fff" />
        <path d="M0.500 11 C-0.500 5 4 5 5 0.500 C8 5 6.500 9.500 2 9.500 Z" fill="#fff" />
      </svg>
      <time className="ml-[15px] w-16 text-right text-[11px] leading-4 whitespace-nowrap">12:27<br />2023. 01. 18.</time>
      <span className="ml-[11px] h-4 w-4 rounded-full bg-[#4cc2ff] text-center text-[10px] leading-4 text-[#222]">1</span>
    </footer>
  );
}

export default function App() {
  return (
    <div className="flex h-screen flex-col overflow-hidden bg-[#efefef] font-['Open_Sans',sans-serif] text-black">
      <Defs />
      <TitleBar />
      <MenuBar />
      <Toolbar />
      <div className="flex min-h-0 grow gap-[3px]">
        <Sidebar />
        <div className="flex min-w-0 grow flex-col">
          <Tabs />
          <Overview />
        </div>
      </div>
      <div className="h-[19px] shrink-0 border-t border-[#d4d4d4] pl-0.5 text-[11px] leading-5">
        Állapot utoljára frissítve: 2023. 01. 18. szerda 12:26:59
      </div>
      <Taskbar />
    </div>
  );
}
